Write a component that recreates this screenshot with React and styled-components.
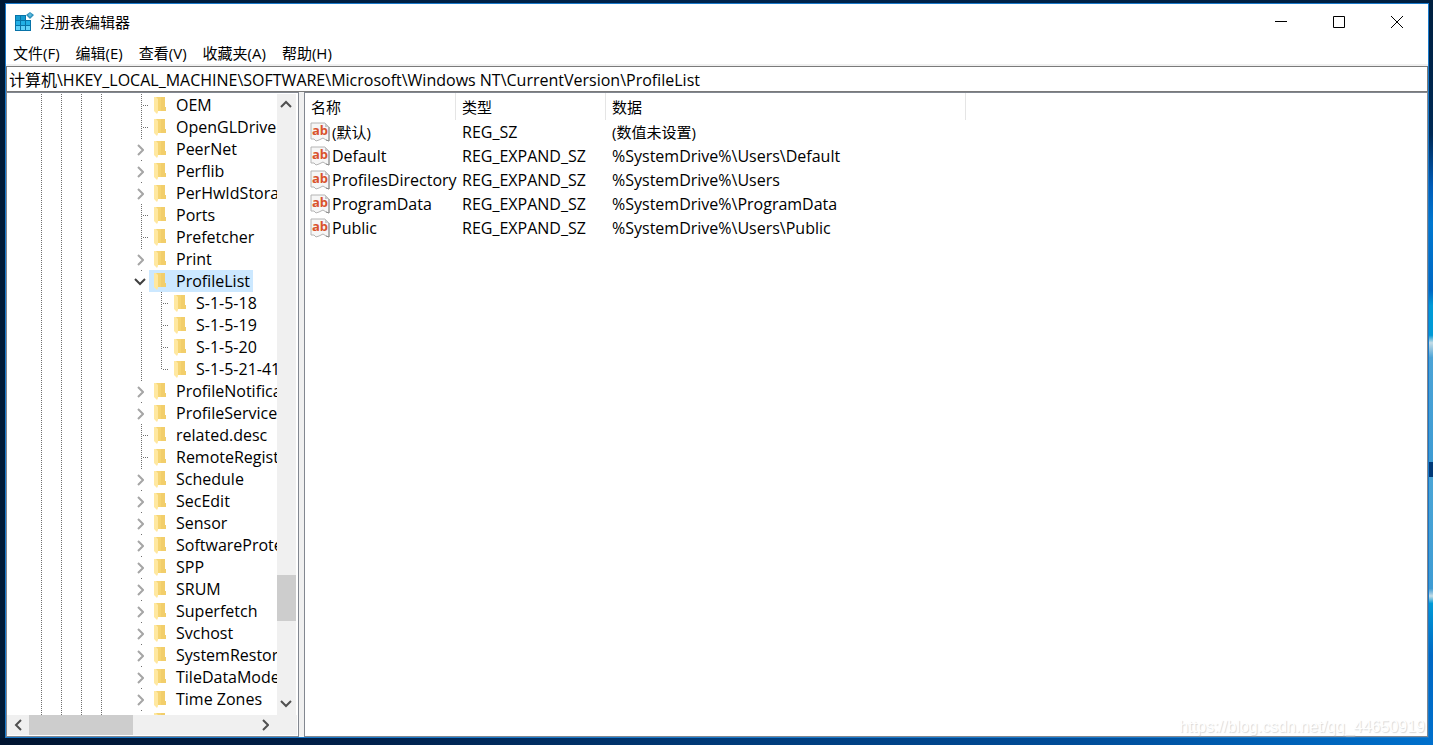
import React, { useState } from "react";
import styled, { createGlobalStyle } from "styled-components";

const GlobalStyle = createGlobalStyle`
    * {
        box-sizing: border-box;
    }

    body {
        margin: 0;
        font-family: "Open Sans", "Noto Sans CJK SC", sans-serif;
        font-size: 15px;
        color: #000;
    }

    button,
    input {
        font: inherit;
        color: inherit;
    }

    svg {
        flex: none;
    }
`;

// desktop behind the window
const Desktop = styled.div`
    display: flex;
    height: 100vh;
    padding: 3px 4px 7px 5px;
    background:
        linear-gradient(
            #001f3f 0%,
            #002a55 18%,
            #005cb8 25%,
            #0078d0 30%,
            #0068c4 39%,
            #009ad6 41%,
            #009ad6 45%,
            #c4dce6 46%,
            #4ba3d6 48%,
            #3d9bd3 62%,
            #003a78 62%,
            #003a78 64%,
            #4aa5d6 64%,
            #3d9bd3 79%,
            #c4dce6 80%,
            #009ad6 81%,
            #0068c4 88%,
            #0070cc 100%
        ) right top / 5px 100% no-repeat,
        linear-gradient(90deg, #001430 0%, #00204a 25%, #003a78 50%, #004c98 75%, #0070cc 100%) left bottom / 100% 7px no-repeat,
        linear-gradient(90deg, #001a36, #00244c 50%, #001f3f) left top / 100% 3px no-repeat,
        #001a36;
`;

const Window = styled.main`
    position: relative;
    display: flex;
    flex-direction: column;
    flex: 1;
    min-width: 0;
    border: 1px solid #1979ca;
    background: #fff;
`;

const TitleBar = styled.header`
    display: flex;
    align-items: center;
    flex: none;
    height: 36px;
    padding: 0 2px 0 8px;
`;

const Title = styled.h1`
    flex: 1;
    margin: 0 0 0 6px;
    padding-bottom: 2px;
    font-size: 15px;
    font-weight: 400;
`;

const CaptionButton = styled.button`
    display: flex;
    align-items: center;
    justify-content: center;
    width: 58px;
    height: 36px;
    padding: 0;
    border: none;
    background: none;

    &:hover {
        background: #e5e5e5;
    }
`;

const MenuBar = styled.nav`
    display: flex;
    gap: 2px;
    flex: none;
    height: 26px;
    border-bottom: 2px solid #f0f0f0;
`;

const MenuButton = styled.button`
    padding: 2px 7px 0;
    border: none;
    background: none;
    line-height: 22px;
    white-space: nowrap;

    &:hover {
        background: #cce8ff;
    }
`;

const AddressInput = styled.input`
    flex: none;
    width: 100%;
    height: 26px;
    padding: 0 2px 1px;
    border: 1px solid #7a7a7a;
    outline: none;
    background: #fff;
    font-size: 16px;
`;

const Body = styled.div`
    display: flex;
    gap: 5px;
    flex: 1;
    min-height: 0;
    background: #f0f0f0;
`;

const Pane = styled.section`
    display: flex;
    flex-direction: column;
    min-width: 0;
    border: 1px solid #828790;
    background: #fff;
`;

const TreePane = styled(Pane)`
    flex: none;
    width: 293px;
    padding: 1px 1px 1px 0;
`;

const ListPane = styled(Pane)`
    flex: 1;
`;

const TreeArea = styled.div`
    display: flex;
    flex: 1;
    min-height: 0;
    padding-right: 1px;
`;

const Tree = styled.ul`
    flex: 1;
    min-width: 0;
    margin: 0;
    padding: 0 0 0 24px;
    overflow: hidden;
    list-style: none;
    font-size: 16px;
`;

const TreeRow = styled.li`
    display: flex;
    width: max-content;
    height: 22px;
`;

// one 20px indent step, with its dotted guide
const Guide = styled.span`
    flex: none;
    width: 20px;
    background: ${({ $line }) =>
        $line
            ? `repeating-linear-gradient(#707070 0 1px, transparent 1px 2px) 10px 0 / 1px ${$line === "half" ? "12px" : "100%"} no-repeat`
            : "none"};
`;

const Branch = styled(Guide)`
    display: flex;
    align-items: center;
    justify-content: flex-end;
    width: 18px;

    &::after {
        content: "";
        width: 7px;
        height: 1px;
        background: repeating-linear-gradient(90deg, transparent 0 1px, #707070 1px 2px);
    }
`;

const Expander = styled.button`
    display: flex;
    align-items: center;
    justify-content: center;
    flex: none;
    width: 18px;
    height: 22px;
    padding: 1px 0 0;
    border: none;
    background: linear-gradient(#707070, #707070) 10px 0 / 1px 1px no-repeat, #fff;
`;

const Label = styled.span`
    display: flex;
    align-items: center;
    gap: 8px;
    padding: 0 3px;
    background: ${({ $selected }) => ($selected ? "#cce8ff" : "transparent")};
    line-height: 22px;
    white-space: nowrap;
`;

const ScrollColumn = styled.div`
    display: flex;
    flex-direction: column;
    flex: none;
    width: 19px;
    padding-bottom: 2px;
    background: #f0f0f0;
`;

const ScrollRow = styled.div`
    display: flex;
    flex: none;
    height: 20px;
    padding-right: 21px;
    background: #f0f0f0;
`;

const ScrollButton = styled.button`
    display: flex;
    align-items: center;
    justify-content: center;
    flex: none;
    width: ${({ $wide }) => ($wide ? "22px" : "18px")};
    height: 20px;
    padding: 0;
    border: none;
    background: none;
`;

const Track = styled.div`
    display: flex;
    flex-direction: ${({ $vertical }) => ($vertical ? "column" : "row")};
    flex: 1;
`;

const Thumb = styled.div`
    flex: ${({ $size }) => $size};
    background: #cdcdcd;
`;

const Space = styled.div`
    flex: ${({ $size }) => $size};
`;

const ValueTable = styled.table`
    width: 661px;
    border-collapse: separate;
    border-spacing: 0;
    table-layout: fixed;
    text-align: left;
`;

const HeadCell = styled.th`
    width: ${({ $width }) => $width};
    height: 27px;
    padding: 0 6px;
    border-right: 1px solid #e5e5e5;
    font-weight: 400;
`;

const Cell = styled.td`
    height: 24px;
    padding: 0 0 0 6px;
    font-size: ${({ $cjk }) => ($cjk ? "15px" : "16px")};
    line-height: 24px;
    white-space: nowrap;
`;

const NameCell = styled.div`
    display: flex;
    align-items: center;
    gap: 2px;
    margin-left: -1px;
`;

const Watermark = styled.span`
    position: absolute;
    right: 3px;
    bottom: 1px;
    color: #fff;
    font-family: "Liberation Sans", Arial, sans-serif;
    font-size: 16px;
    text-shadow: 1px 1px 1px #d8d8d8;
`;

const RegeditIcon = () => (
    <svg width="20" height="20" viewBox="0 0 20 20" aria-hidden="true">
        <path d="M1 3h11v5h5v11H1z" fill="#0873a8" />
        <path d="M2 4h4v4H2zM7 4h4v4H7z" fill="#159bd0" />
        <path d="M2 9h4v4H2zM7 9h4v4H7zM12 9h4v4h-4z" fill="#22b0e6" />
        <path d="M2 14h4v4H2zM7 14h4v4H7zM12 14h4v4h-4z" fill="#5fd0f8" />
        <path d="M16 0l4 3-4 4-4-4z" fill="#2a90bd" />
        <path d="M16 1l2 2-2 2-2-2z" fill="#5fb9db" />
    </svg>
);

const FolderIcon = () => (
    <svg width="16" height="20" viewBox="0 0 16 20" aria-hidden="true">
        <path d="M4 2h9v10h1v4H4z" fill="#f6d573" />
        <path d="M9 2h4v10h1v4H9z" fill="#f0c965" opacity="0.6" />
        <path d="M2 2h2l2 2v13l-1 2-1-1-2-2z" fill="#ffe8a0" />
    </svg>
);

const StringIcon = () => (
    <svg width="20" height="20" viewBox="0 0 20 20" aria-hidden="true">
        <path d="M1 1h14l4 4v14l-3-1-3-2-4 2-3 1-2-2-3 0z" fill="#f6f6f6" stroke="#b4b4b4" />
        <path d="M19 5v14l-3-1" fill="none" stroke="#8c8c8c" />
        <path d="M15 1v4h4z" fill="#c8c8c8" />
        <text x="2" y="13" fill="#d9522c" fontFamily="Open Sans" fontWeight="700" fontSize="13">ab</text>
    </svg>
);

const paths = {
    up: "M1 7l5-5 5 5",
    down: "M1 2l5 5 5-5",
    left: "M7 1L2 6l5 5",
    right: "M2 1l5 5-5 5",
};

const Chevron = ({ direction, color = "#505050" }) => {
    const flat = direction === "up" || direction === "down";
    return (
        <svg width={flat ? 12 : 8} height={flat ? 9 : 12} aria-hidden="true">
            <path d={paths[direction]} fill="none" stroke={color} strokeWidth="2" />
        </svg>
    );
};

const menus = ["文件(F)", "编辑(E)", "查看(V)", "收藏夹(A)", "帮助(H)"];

const keys = [
    { name: "OEM" },
    { name: "OpenGLDrivers" },
    { name: "PeerNet", closed: true },
    { name: "Perflib", closed: true },
    { name: "PerHwIdStorage", closed: true },
    { name: "Ports" },
    { name: "Prefetcher" },
    { name: "Print", closed: true },
    { name: "ProfileList", children: ["S-1-5-18", "S-1-5-19", "S-1-5-20", "S-1-5-21-41"] },
    { name: "ProfileNotification", closed: true },
    { name: "ProfileService", closed: true },
    { name: "related.desc" },
    { name: "RemoteRegistry" },
    { name: "Schedule", closed: true },
    { name: "SecEdit", closed: true },
    { name: "Sensor", closed: true },
    { name: "SoftwareProtectionPlatform", closed: true },
    { name: "SPP", closed: true },
    { name: "SRUM", closed: true },
    { name: "Superfetch", closed: true },
    { name: "Svchost", closed: true },
    { name: "SystemRestore", closed: true },
    { name: "TileDataModel", closed: true },
    { name: "Time Zones", closed: true },
    { name: "TokenBroker", closed: true },
];

const values = [
    { name: "(默认)", type: "REG_SZ", data: "(数值未设置)", cjk: true },
    { name: "Default", type: "REG_EXPAND_SZ", data: "%SystemDrive%\\Users\\Default" },
    { name: "ProfilesDirectory", type: "REG_EXPAND_SZ", data: "%SystemDrive%\\Users" },
    { name: "ProgramData", type: "REG_EXPAND_SZ", data: "%SystemDrive%\\ProgramData" },
    { name: "Public", type: "REG_EXPAND_SZ", data: "%SystemDrive%\\Users\\Public" },
];

// guides of the ancestor keys
const Indent = () => (
    <>
        <Guide $line />
        <Guide $line />
        <Guide $line />
        <Guide $line />
        <Guide />
    </>
);

function KeyNode({ item }) {
    const [open, setOpen] = useState(Boolean(item.children));
    const hasArrow = item.closed || item.children;

    return (
        <>
            <TreeRow>
                <Indent />
                {hasArrow ? (
                    <Expander aria-label={item.name} onClick={() => setOpen(!open)}>
                        {open && item.children ? (
                            <Chevron direction="down" color="#404040" />
                        ) : (
                            <Chevron direction="right" color="#a6a6a6" />
                        )}
                    </Expander>
                ) : (
                    <Branch $line />
                )}
                <Label $selected={item.name === "ProfileList"}>
                    <FolderIcon />
                    {item.name}
                </Label>
            </TreeRow>
            {open &&
                item.children?.map((child, i) => (
                    <TreeRow key={child}>
                        <Indent />
                        <Guide $line />
                        <Branch $line={i === item.children.length - 1 ? "half" : "full"} />
                        <Label>
                            <FolderIcon />
                            {child}
                        </Label>
                    </TreeRow>
                ))}
        </>
    );
}

function App() {
    const [address, setAddress] = useState(
        "计算机\\HKEY_LOCAL_MACHINE\\SOFTWARE\\Microsoft\\Windows NT\\CurrentVersion\\ProfileList"
    );

    return (
        <Desktop>
            <GlobalStyle />
            <Window>
                <TitleBar>
                    <RegeditIcon />
                    <Title>注册表编辑器</Title>
                    <CaptionButton aria-label="最小化">
                        <svg width="12" height="12"><path d="M0 5.5h12" stroke="#000" /></svg>
                    </CaptionButton>
                    <CaptionButton aria-label="最大化">
                        <svg width="12" height="12"><path d="M.5 .5h11v11H.5z" fill="none" stroke="#000" /></svg>
                    </CaptionButton>
                    <CaptionButton aria-label="关闭">
                        <svg width="12" height="12"><path d="M0 0l12 12M12 0L0 12" stroke="#000" /></svg>
                    </CaptionButton>
                </TitleBar>

                <MenuBar>
                    {menus.map((menu) => (
                        <MenuButton key={menu}>{menu}</MenuButton>
                    ))}
                </MenuBar>

                <AddressInput
                    aria-label="地址"
                    value={address}
                    onChange={(e) => setAddress(e.target.value)}
                />

                <Body>
                    <TreePane>
                        <TreeArea>
                            <Tree>
                                {keys.map((item) => (
                                    <KeyNode key={item.name} item={item} />
                                ))}
                            </Tree>
                            <ScrollColumn>
                                <ScrollButton aria-label="向上滚动"><Chevron direction="up" /></ScrollButton>
                                <Track $vertical>
                                    <Space $size={461} />
                                    <Thumb $size={46} />
                                    <Space $size={72} />
                                </Track>
                                <ScrollButton aria-label="向下滚动"><Chevron direction="down" /></ScrollButton>
                            </ScrollColumn>
                        </TreeArea>
                        <ScrollRow>
                            <ScrollButton $wide aria-label="向左滚动"><Chevron direction="left" /></ScrollButton>
                            <Track>
                                <Thumb $size={104} />
                                <Space $size={121} />
                            </Track>
                            <ScrollButton $wide aria-label="向右滚动"><Chevron direction="right" /></ScrollButton>
                        </ScrollRow>
                    </TreePane>

                    <ListPane>
                        <ValueTable>
                            <thead>
                                <tr>
                                    <HeadCell $width="151px">名称</HeadCell>
                                    <HeadCell $width="150px">类型</HeadCell>
                                    <HeadCell $width="360px">数据</HeadCell>
                                </tr>
                            </thead>
                            <tbody>
                                {values.map(({ name, type, data, cjk }) => (
                                    <tr key={name}>
                                        <Cell $cjk={cjk}>
                                            <NameCell>
                                                <StringIcon />
                                                {name}
                                            </NameCell>
                                        </Cell>
                                        <Cell>{type}</Cell>
                                        <Cell $cjk={cjk}>{data}</Cell>
                                    </tr>
                                ))}
                            </tbody>
                        </ValueTable>
                    </ListPane>
                </Body>
                <Watermark>https://blog.csdn.net/qq_44650919</Watermark>
            </Window>
        </Desktop>
    );
}

export default App;
